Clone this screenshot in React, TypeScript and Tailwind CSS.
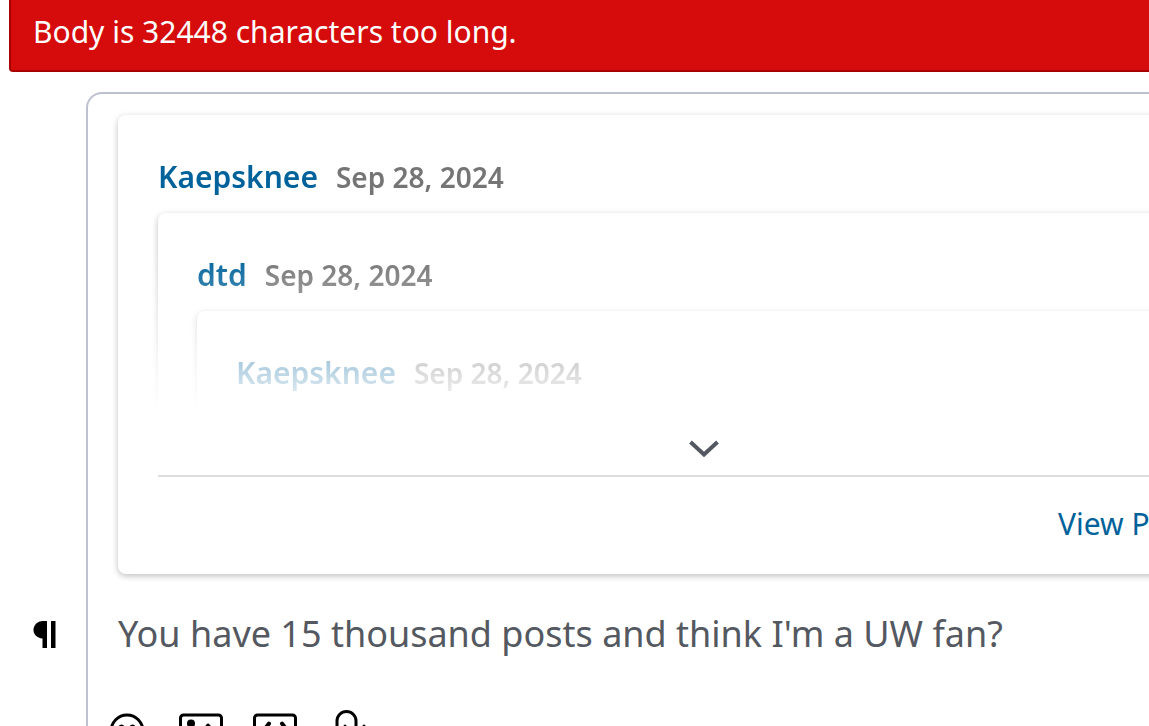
import React, { useState } from 'react';

interface QuoteData {
  author: string;
  date: string;
  child?: QuoteData;
}

const quote: QuoteData = {
  author: 'dtd',
  date: 'Sep 28, 2024',
  child: { author: 'Kaepsknee', date: 'Sep 28, 2024' },
};

function QuoteHeader({ author, date }: { author: string; date: string }) {
  return (
    <div className="flex items-baseline gap-[18px] h-11 leading-[44px] font-semibold whitespace-nowrap">
      <a href="#user" className="text-[30px] text-[#00629b]">{author}</a>
      <span className="text-[28px] text-[#757575]">{date}</span>
    </div>
  );
}

function NestedQuote({ author, date, child }: QuoteData) {
  return (
    <div className="mt-3.5 rounded-lg bg-white px-[39px] pt-10 pb-10 shadow-[0_2px_6px_rgba(0,0,0,0.25)]">
      <QuoteHeader author={author} date={date} />
      {child && <NestedQuote {...child} />}
    </div>
  );
}

const iconProps = {
  viewBox: '0 0 48 48',
  fill: 'none',
  stroke: 'currentColor',
  strokeWidth: 3,
  strokeLinecap: 'round' as const,
  strokeLinejoin: 'round' as const,
};

function SmileIcon() {
  return (
    <svg {...iconProps} className="size-12">
      <circle cx="24" cy="26" r="16" />
      <circle cx="18.500" cy="22.500" r="3" fill="currentColor" stroke="none" />
      <circle cx="29.500" cy="22.500" r="3" fill="currentColor" stroke="none" />
      <path d="M16 30c2 4 5 6 8 6s6-2 8-6" />
    </svg>
  );
}

function ImageIcon() {
  return (
    <svg {...iconProps} className="size-12">
      <rect x="3.500" y="10" width="41" height="32" rx="3" />
      <circle cx="14" cy="18.500" r="4" fill="currentColor" stroke="none" />
      <path d="M4 38l10-10 6 6 11-14 13 15" />
    </svg>
  );
}

function CodeIcon() {
  return (
    <svg {...iconProps} className="size-12">
      <rect x="3.500" y="10" width="41" height="32" rx="3" />
      <path d="M18 18.500l-6 8 6 8M31 18.500l6 8-6 8" strokeWidth="4" />
    </svg>
  );
}

function MicIcon() {
  return (
    <svg {...iconProps} className="size-12">
      <path d="M12 30V16a9.500 9.500 0 0 1 19 0V30" />
      <path d="M20 21v13M39 21v10" />
    </svg>
  );
}

const tools = [
  { label: 'Emoji', Icon: SmileIcon },
  { label: 'Image', Icon: ImageIcon },
  { label: 'Code', Icon: CodeIcon },
  { label: 'Attachment', Icon: MicIcon },
];

export default function App() {
  const [expanded, setExpanded] = useState(false);

  return (
    <div className="h-screen overflow-hidden bg-white font-['Noto_Sans','Lucida_Grande',sans-serif]">
      <div className="-mr-[172px]">
        {/* Error banner */}
        <div role="alert" className="ml-[9px] rounded-b border-2 border-t-0 border-[#a80000] bg-[#d60b0b] px-[22px] pt-3 pb-[18px] text-[30px] leading-10 text-white">
          Body is 32448 characters too long.
        </div>

        <div className="mt-5 flex">
          {/* Gutter */}
          <div className="flex w-[86px] shrink-0 items-start justify-center pt-[528px] pl-1">
            <button type="button" aria-label="Paragraph format" className="text-black">
              <svg viewBox="0 0 24 30" className="h-[30px] w-6" fill="currentColor">
                <path d="M10 1h4v27h-4.500v-9.500C4 18 .5 14.500.5 10S4 1 10 1zM18 1h4.500v27H18z" />
              </svg>
            </button>
          </div>

          {/* Editor */}
          <div className="grow rounded-2xl border-2 border-[#bec1d0] px-[30px] pt-[21px]">
            <article className="rounded-lg bg-white px-10 pt-10 shadow-[0_2px_6px_rgba(0,0,0,0.25)]">
              <div
                className={
                  expanded
                    ? '-mx-10 px-10'
                    : '-mx-10 h-[262px] overflow-hidden px-10 [mask-image:linear-gradient(to_bottom,black_100px,transparent_260px)]'
                }
              >
                <QuoteHeader author="Kaepsknee" date="Sep 28, 2024" />
                <NestedQuote {...quote} />
              </div>

              <button
                type="button"
                aria-label="Expand quote"
                aria-expanded={expanded}
                onClick={() => setExpanded(!expanded)}
                className="flex h-[58px] w-full items-center justify-center pt-1.5 text-[#545860]"
              >
                <svg viewBox="0 0 30 18" className="h-[18px] w-[30px]" fill="none" stroke="currentColor" strokeWidth="4">
                  <path d="M1.500 2L15 14.500 28.500 2" />
                </svg>
              </button>
              <div className="flex h-[99px] items-center justify-end border-t-2 border-[#dedede] pr-14 pb-1">
                <a href="#post" className="text-[30px] leading-10 text-[#00629b]">View Post</a>
              </div>
            </article>

            <div
              role="textbox"
              aria-label="Reply"
              contentEditable
              suppressContentEditableWarning
              className="pt-8 text-[36px] leading-[56px] text-[#545860] outline-none"
            >
              You have 15 thousand posts and think I'm a UW fan?
            </div>

            {/* Toolbar */}
            <div className="-ml-[15px] mt-[43px] flex gap-[26px] text-black">
              {tools.map(({ label, Icon }) => (
                <button key={label} type="button" aria-label={label}>
                  <Icon />
                </button>
              ))}
            </div>
          </div>
        </div>
      </div>
    </div>
  );
}
